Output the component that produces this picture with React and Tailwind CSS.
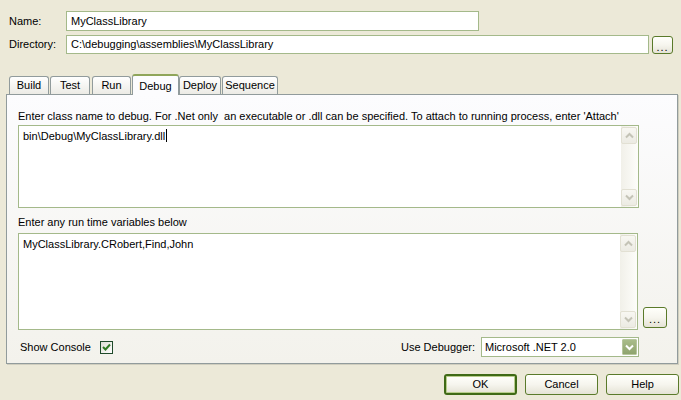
import React from "react";

const Chevron = ({ up, color = "#C4C3B6", size = 9 }) => (
  <svg width={size} height={size} viewBox="0 0 9 9">
    <path
      d={up ? "M1 6.5 L4.5 3 L8 6.5" : "M1 2.5 L4.5 6 L8 2.5"}
      fill="none"
      stroke={color}
      strokeWidth="2"
    />
  </svg>
);

const ArrowBtn = ({ up }) => (
  <div className="w-[16px] h-[17px] rounded-[2px] border border-[#E2E0D3] bg-gradient-to-b from-[#F8F7F2] to-[#ECEBE3] flex items-center justify-center">
    <Chevron up={up} />
  </div>
);

const ScrollBar = () => (
  <div className="flex flex-col w-[17px] bg-gradient-to-r from-[#F1F0E9] to-[#FDFDFA] pt-[1px] pb-[1px] pr-[1px]">
    <ArrowBtn up />
    <div className="flex-1" />
    <ArrowBtn />
  </div>
);

const TextBox = ({ children, className }) => (
  <div className={"flex bg-white border border-[#A4B98A] " + className}>
    <div className="flex-1 pl-[4px] pt-[3px] leading-[14px]">{children}</div>
    <ScrollBar />
  </div>
);

const XpButton = ({ children, className, isDefault }) => (
  <div
    className={
      "flex items-center justify-center rounded-[3px] border bg-gradient-to-b from-[#FFFFFB] via-[#F6F5EE] to-[#E5E3D6] " +
      (isDefault ? "border-[#3F6A16] shadow-[inset_0_0_0_1px_#B8CD8D] " : "border-[#5A7A2A] ") +
      className
    }
  >
    {children}
  </div>
);

const tabs = [
  { label: "Build", w: "w-[40px]", ml: "ml-0" },
  { label: "Test", w: "w-[40px]", ml: "ml-[1px]" },
  { label: "Run", w: "w-[39px]", ml: "ml-[2px]" },
  { label: "Debug", w: "w-[47px]", ml: "ml-[1px]", active: true },
  { label: "Deploy", w: "w-[42px]", ml: "ml-0" },
  { label: "Sequence", w: "w-[56px]", ml: "ml-[1px]" },
];

export default function App() {
  return (
    <div className="w-[681px] h-[400px] bg-[#ECE9D8] text-[11px] text-black overflow-hidden font-['Liberation_Sans',Arial,sans-serif]">
      {/* name + directory */}
      <div className="flex items-center pt-[11px] pl-[9px]">
        <span className="w-[57px]">Name:</span>
        <div className="w-[413px] h-[20px] bg-white border border-[#A4B98A] pl-[4px] flex items-center">
          MyClassLibrary
        </div>
      </div>
      <div className="flex items-center mt-[4px] pl-[9px]">
        <span className="w-[57px]">Directory:</span>
        <div className="w-[583px] h-[19px] bg-white border border-[#A4B98A] pl-[4px] flex items-center">
          {"C:\\debugging\\assemblies\\MyClassLibrary"}
        </div>
        <XpButton className="ml-[3px] w-[21px] h-[18px] items-end pb-[2px]">
          <span className="leading-[8px] tracking-[1px]">...</span>
        </XpButton>
      </div>

      {/* tabs */}
      <div className="flex items-end h-[20px] mt-[20px] pl-[9px] relative z-10">
        {tabs.map((t) =>
          t.active ? (
            <div
              key={t.label}
              className={
                "h-[21px] -mb-[1px] flex items-start justify-center pt-[2px] rounded-t-[3px] border-x border-[#919B9C] border-t-2 border-t-[#8FA55A] bg-[#FCFCFE] " +
                t.w +
                " " +
                t.ml
              }
            >
              {t.label}
            </div>
          ) : (
            <div
              key={t.label}
              className={
                "h-[18px] flex items-center justify-center rounded-t-[3px] border border-b-0 border-[#919B9C] bg-gradient-to-b from-[#FFFFFF] to-[#ECEBE5] " +
                t.w +
                " " +
                t.ml
              }
            >
              {t.label}
            </div>
          )
        )}
      </div>

      {/* panel */}
      <div className="ml-[6px] w-[672px] h-[270px] border border-[#919B9C] bg-gradient-to-b from-[#FCFCFE] to-[#F3F2EC] pl-[11px] shadow-[1px_1px_0_#D0CEBF]">
        <div className="mt-[14px] h-[14px] leading-[14px]">
          Enter class name to debug. For .Net only&nbsp; an executable or .dll can be specified. To attach to running process, enter 'Attach'
        </div>
        <TextBox className="mt-[2px] w-[621px] h-[83px]">
          <span>{"bin\\Debug\\MyClassLibrary.dll"}</span>
          <span className="inline-block w-[1px] h-[13px] bg-black align-[-2px] ml-[1px]" />
        </TextBox>
        <div className="mt-[7px] h-[14px] leading-[14px]">Enter any run time variables below</div>
        <div className="flex items-end mt-[4px]">
          <TextBox className="w-[620px] h-[97px]">MyClassLibrary.CRobert,Find,John</TextBox>
          <XpButton className="ml-[5px] mb-[2px] w-[24px] h-[21px] items-end pb-[4px]">
            <span className="leading-[8px] tracking-[1px]">...</span>
          </XpButton>
        </div>
        <div className="flex items-center mt-[7px] h-[20px]">
          <span className="pl-[2px] w-[82px]">Show Console</span>
          <div className="w-[13px] h-[13px] border border-[#1F4A2A] bg-gradient-to-br from-[#DCDCD4] to-[#FFFFFF] flex items-center justify-center">
            <svg width="9" height="9" viewBox="0 0 9 9">
              <path d="M1 4 L3.5 6.5 L8 1.5" fill="none" stroke="#2F7A22" strokeWidth="2" />
            </svg>
          </div>
          <span className="ml-[288px] w-[80px]">Use Debugger:</span>
          <div className="w-[158px] h-[20px] bg-white border border-[#A4B98A] flex items-center">
            <span className="flex-1 pl-[3px]">Microsoft .NET 2.0</span>
            <div className="w-[15px] h-[16px] mr-[1px] rounded-[1px] bg-gradient-to-b from-[#A9BC8A] to-[#8FA46E] border border-[#B6C69D] flex items-center justify-center">
              <Chevron color="#FFFFFF" />
            </div>
          </div>
        </div>
      </div>

      {/* bottom buttons */}
      <div className="flex justify-end gap-[8px] mt-[10px] pr-[2px]">
        <XpButton isDefault className="w-[73px] h-[21px] border-2">
          OK
        </XpButton>
        <XpButton className="w-[73px] h-[21px]">Cancel</XpButton>
        <XpButton className="w-[73px] h-[21px]">Help</XpButton>
      </div>
    </div>
  );
}
